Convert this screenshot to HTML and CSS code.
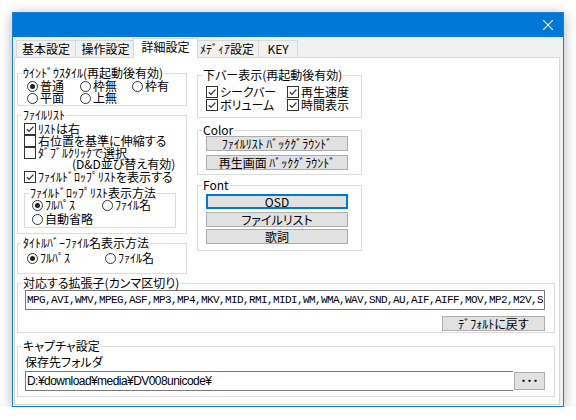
FILE: index.html
```html
<!DOCTYPE html>
<html lang="ja">
<head>
<meta charset="utf-8">
<title>詳細設定</title>
<link rel="stylesheet" href="styles.css">
</head>
<body>
<div class="window">
  <div class="titlebar">
    <svg class="close" width="10" height="10" viewBox="0 0 10 10" aria-hidden="true"><path d="M0 0L10 10M10 0L0 10" stroke="#fff" stroke-width="1.1" fill="none"/></svg>
  </div>
  <div class="tabs">
    <div class="tab t1">基本設定</div>
    <div class="tab t2">操作設定</div>
    <div class="tab active">詳細設定</div>
    <div class="tab t4">ﾒﾃﾞｨｱ設定</div>
    <div class="tab t5">KEY</div>
  </div>
  <div class="panel">
    <div class="top">
      <div class="col-left">
        <div class="group g-style">
          <div class="gtitle">ｳｲﾝﾄﾞｳｽﾀｲﾙ(再起動後有効)</div>
          <div class="grid grid-style">
            <label class="opt"><i class="rb on"></i>普通</label>
            <label class="opt"><i class="rb"></i>枠無</label>
            <label class="opt"><i class="rb"></i>枠有</label>
            <label class="opt"><i class="rb"></i>平面</label>
            <label class="opt"><i class="rb"></i>上無</label>
          </div>
        </div>
        <div class="group g-list">
          <div class="gtitle">ﾌｧｲﾙﾘｽﾄ</div>
          <div class="list-body">
            <label class="opt r1"><i class="cb"><svg viewBox="0 0 10 10"><path d="M1.8 5.2L4 7.4L8.4 2.6"/></svg></i>ﾘｽﾄは右</label>
            <label class="opt"><i class="cb"></i>右位置を基準に伸縮する</label>
            <label class="opt multi"><i class="cb"></i><span class="lines"><span>ﾀﾞﾌﾞﾙｸﾘｯｸで選択</span><span class="l2">(D&amp;D並び替え有効)</span></span></label>
            <label class="opt r4"><i class="cb"><svg viewBox="0 0 10 10"><path d="M1.8 5.2L4 7.4L8.4 2.6"/></svg></i>ﾌｧｲﾙﾄﾞﾛｯﾌﾟﾘｽﾄを表示する</label>
            <div class="group g-drop">
              <div class="gtitle">ﾌｧｲﾙﾄﾞﾛｯﾌﾟﾘｽﾄ表示方法</div>
              <div class="grid grid-drop">
                <label class="opt"><i class="rb on"></i>ﾌﾙﾊﾟｽ</label>
                <label class="opt"><i class="rb"></i>ﾌｧｲﾙ名</label>
                <label class="opt"><i class="rb"></i>自動省略</label>
              </div>
            </div>
          </div>
        </div>
        <div class="group g-tbar">
          <div class="gtitle">ﾀｲﾄﾙﾊﾞｰﾌｧｲﾙ名表示方法</div>
          <div class="grid grid-tbar">
            <label class="opt"><i class="rb on"></i>ﾌﾙﾊﾟｽ</label>
            <label class="opt"><i class="rb"></i>ﾌｧｲﾙ名</label>
          </div>
        </div>
      </div>
      <div class="col-right">
        <div class="group g-bar">
          <div class="gtitle">下バー表示(再起動後有効)</div>
          <div class="grid grid-bar">
            <label class="opt"><i class="cb"><svg viewBox="0 0 10 10"><path d="M1.8 5.2L4 7.4L8.4 2.6"/></svg></i>シークバー</label>
            <label class="opt"><i class="cb"><svg viewBox="0 0 10 10"><path d="M1.8 5.2L4 7.4L8.4 2.6"/></svg></i>再生速度</label>
            <label class="opt"><i class="cb"><svg viewBox="0 0 10 10"><path d="M1.8 5.2L4 7.4L8.4 2.6"/></svg></i>ボリューム</label>
            <label class="opt"><i class="cb"><svg viewBox="0 0 10 10"><path d="M1.8 5.2L4 7.4L8.4 2.6"/></svg></i>時間表示</label>
          </div>
        </div>
        <div class="group g-color">
          <div class="gtitle">Color</div>
          <button class="btn wide c1">ﾌｧｲﾙﾘｽﾄ ﾊﾞｯｸｸﾞﾗｳﾝﾄﾞ</button>
          <button class="btn wide c2">再生画面 ﾊﾞｯｸｸﾞﾗｳﾝﾄﾞ</button>
        </div>
        <div class="group g-font">
          <div class="gtitle">Font</div>
          <button class="btn wide focus f1">OSD</button>
          <button class="btn wide f2">ファイルリスト</button>
          <button class="btn wide f3">歌詞</button>
        </div>
      </div>
    </div>
    <div class="group g-ext">
      <div class="gtitle">対応する拡張子(カンマ区切り)</div>
      <div class="textbox ext">MPG,AVI,WMV,MPEG,ASF,MP3,MP4,MKV,MID,RMI,MIDI,WM,WMA,WAV,SND,AU,AIF,AIFF,MOV,MP2,M2V,S</div>
      <button class="btn reset">ﾃﾞﾌｫﾙﾄに戻す</button>
    </div>
    <div class="group g-cap">
      <div class="gtitle">キャプチャ設定</div>
      <div class="caplabel">保存先フォルダ</div>
      <div class="caprow">
        <div class="textbox path">D:¥download¥media¥DV008unicode¥</div>
        <button class="btn browse">･･･</button>
      </div>
    </div>
  </div>
</div>
</body>
</html>
```
FILE: styles.css
```css
* { box-sizing: border-box; margin: 0; padding: 0; }
html, body { background: #fff; }
body {
  margin: 0;
  font-family: "Noto Sans CJK JP", "Noto Sans", sans-serif;
  font-size: 12px;
  line-height: 12px;
  color: #000;
  font-feature-settings: "palt" 1;
}
.window {
  margin: 12px 0 0 12px;
  width: 552px;
  height: 395px;
  border: 1px solid #1883d7;
  background: #f0f0f0;
  box-shadow: 0 2px 12px rgba(0, 0, 0, 0.3);
  display: flex;
  flex-direction: column;
}
.titlebar {
  flex: none;
  height: 24px;
  background: #0078d7;
  display: flex;
  align-items: center;
  justify-content: flex-end;
  padding-right: 10px;
}
.close { display: block; }
.tabs {
  flex: none;
  height: 20px;
  display: flex;
  align-items: flex-end;
  padding-left: 4px;
}
.tab {
  height: 17px;
  margin-left: -1px;
  border: 1px solid #d9d9d9;
  border-bottom: 0;
  background: #f0f0f0;
  text-align: center;
  line-height: 16px;
  white-space: nowrap;
}
.t1 { width: 60px; }
.t2 { width: 61px; }
.t4 { width: 64px; margin-left: -3px; }
.t5 { width: 40px; }
.tab.active {
  position: relative;
  z-index: 1;
  width: 65px;
  height: 20px;
  margin-left: -3px;
  margin-bottom: -1px;
  background: #fff;
  line-height: 15px;
}
.panel {
  flex: none;
  height: 348px;
  margin: 0 3px 1px 1px;
  background: #fff;
  border: 1px solid #d9d9d9;
  padding-left: 2px;
}
.top { display: flex; align-items: flex-start; }
.col-left { width: 170px; padding-top: 15px; }
.col-right { width: 165px; margin-left: 10px; padding-top: 17px; }

.group { border: 1px solid #dcdcdc; background: #fff; }
.gtitle {
  display: block;
  width: max-content;
  margin: -8px 0 0 4px;
  padding: 0 1px;
  height: 14px;
  line-height: 14px;
  background: #fff;
  white-space: nowrap;
}
.g-style { height: 33px; }
.g-list { height: 119px; margin-top: 9px; }
.g-tbar { height: 31px; margin-top: 9px; }
.g-bar { height: 43px; }
.g-color { height: 45px; margin-top: 12px; }
.g-font { height: 66px; margin-top: 10px; }
.g-ext { width: 538px; height: 50px; margin-top: 9px; }
.g-cap { width: 538px; height: 51px; margin-top: 13px; }

.grid { display: grid; grid-auto-rows: 12px; }
.grid-style { grid-template-columns: 53px 52px auto; padding-left: 9px; }
.grid-drop { grid-template-columns: 70px auto; row-gap: 2px; padding-left: 7px; margin-top: -1px; }
.grid-tbar { grid-template-columns: 78px auto; padding-left: 9px; margin-top: 2px; }
.grid-bar { grid-template-columns: 81px auto; padding-left: 8px; margin-top: 4px; row-gap: 1px; }

.opt {
  display: flex;
  align-items: center;
  height: 12px;
  white-space: nowrap;
}
.rb {
  flex: none;
  width: 11px;
  height: 11px;
  border: 1px solid #333;
  border-radius: 50%;
  background: #fff;
  margin-right: 2px;
  display: flex;
  align-items: center;
  justify-content: center;
}
.rb.on::after {
  content: "";
  width: 5px;
  height: 5px;
  border-radius: 50%;
  background: #222;
}
.cb {
  flex: none;
  width: 12px;
  height: 12px;
  border: 1px solid #333;
  background: #fff;
  margin-right: 2px;
  display: flex;
  align-items: center;
  justify-content: center;
}
.cb svg { display: block; width: 10px; height: 10px; fill: none; stroke: #333; stroke-width: 1.3; }

.list-body { padding-left: 6px; }
.r1 { margin-top: 1px; }
.multi { height: 22px; align-items: flex-start; }
.lines { display: flex; flex-direction: column; line-height: 11px; }
.l2 { margin-left: 34px; }
.r4 { margin-top: 2px; }
.g-drop { width: 152px; height: 35px; margin-top: 10px; }

.btn {
  display: block;
  font: inherit;
  color: #000;
  background: #e1e1e1;
  border: 1px solid #adadad;
  height: 15px;
  line-height: 12px;
  text-align: center;
  white-space: nowrap;
  padding: 0;
}
.wide { width: 142px; margin-left: 8px; }
.c1 { margin-top: -1px; }
.c2 { margin-top: 4px; }
.f1 { margin-top: 2px; }
.f2 { margin-top: 3px; }
.f3 { margin-top: 2px; }
.focus { border: 2px solid #0078d7; line-height: 10px; }

.textbox {
  background: #fff;
  border: 1px solid #7a7a7a;
  white-space: nowrap;
  overflow: hidden;
}
.ext {
  width: 520px;
  height: 20px;
  margin-left: 7px;
  padding-left: 1px;
  font-family: "Liberation Mono", monospace;
  font-size: 11px;
  letter-spacing: -0.6px;
  line-height: 18px;
  font-feature-settings: normal;
}
.reset { width: 103px; margin: 6px 9px 0 auto; }
.caplabel { margin: 2px 0 0 7px; height: 14px; line-height: 14px; }
.caprow { display: flex; align-items: flex-start; margin: 2px 0 0 7px; }
.path {
  width: 488px;
  height: 20px;
  border-right: 0;
  padding-left: 1px;
  line-height: 18px;
  font-family: "Liberation Sans", "Noto Sans CJK JP", sans-serif;
  letter-spacing: -0.55px;
}
.browse { width: 31px; height: 18px; margin: 1px 0 0 1px; line-height: 16px; font-weight: bold; }
```
